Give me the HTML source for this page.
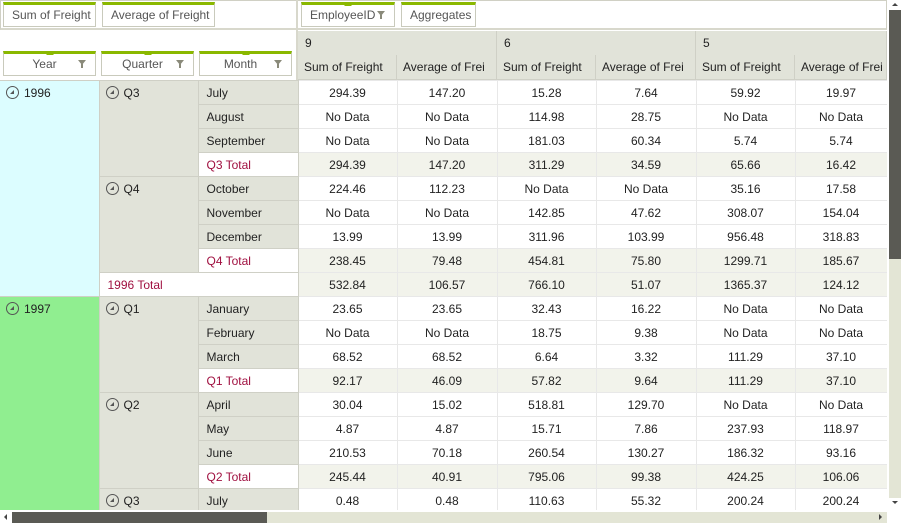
<!DOCTYPE html>
<html><head><meta charset="utf-8"><style>
*{box-sizing:border-box;margin:0;padding:0}
body{width:903px;height:526px;overflow:hidden;background:#fff;font-family:"Liberation Sans",sans-serif;font-size:12px;color:#222;position:relative}
.chip{position:absolute;height:25px;border:1px solid #c9cabc;border-top:3px solid #8ab800;background:#fff;color:#555;line-height:20px;padding-left:8px;font-size:12px}
.chip .tri{position:absolute;top:-3px;left:50%;margin-left:-4px;width:0;height:0;border-left:4px solid transparent;border-right:4px solid transparent;border-bottom:4px solid #8ab800}
.chip .fn{position:absolute;right:9px;top:6px;width:0;height:0;border-left:4px solid transparent;border-right:4px solid transparent;border-top:5px solid #8a8a7a}
.chip .fn:after{content:"";position:absolute;left:-1px;top:-1px;width:2px;height:4px;background:#8a8a7a}
table{position:absolute;left:0;top:80px;border-collapse:collapse;table-layout:fixed}
td{height:24px;padding:0 6px;white-space:nowrap;overflow:hidden;vertical-align:middle}
td.d{text-align:center;border:1px solid #e8e8e8;background:#fff}
td.t{background:#f2f3eb}
td.m{background:#e1e3d9;border:1px solid #cfd0c6;padding-left:8px}
td.mt{background:#fff;color:#a01040;border:1px solid #cfd0c6;padding-left:8px}
td.q{background:#e1e3d9;border:1px solid #cfd0c6;vertical-align:top;padding-top:5px}
td.y{vertical-align:top;padding-top:5px;border:1px solid #cfd0c6;border-left:none}
.ic{display:inline-block;width:13px;height:13px;border:1px solid #555;border-radius:50%;vertical-align:-2px;margin-right:5px;position:relative}
.ic:after{content:"";position:absolute;left:3px;top:3px;border-left:4px solid transparent;border-bottom:4px solid #555}
.hdr{position:absolute;background:#e1e3d9;border-right:1px solid #cfd0c6;border-bottom:1px solid #cfd0c6;padding-left:7px;line-height:24px;font-size:12px;overflow:hidden;white-space:nowrap}
</style></head><body>
<div style="position:absolute;left:0;top:0;width:887px;height:30px;border:1px solid #d0d0c4;border-bottom:2px solid #d8d8cc"></div>
<div style="position:absolute;left:296px;top:0;width:2px;height:80px;background:#d8d8cc"></div>
<div class="chip" style="left:3px;top:2px;width:93px">Sum of Freight</div>
<div class="chip" style="left:102px;top:2px;width:113px">Average of Freight</div>
<div class="chip" style="left:301px;top:2px;width:94px">EmployeeID<span class="tri"></span><span class="fn"></span></div>
<div class="chip" style="left:401px;top:2px;width:75px">Aggregates</div>
<div class="chip" style="left:3px;top:51px;width:93px;text-align:center;padding:0 10px 0 0">Year<span class="tri"></span><span class="fn"></span></div>
<div class="chip" style="left:101px;top:51px;width:93px;text-align:center;padding:0 10px 0 0">Quarter<span class="tri"></span><span class="fn"></span></div>
<div class="chip" style="left:199px;top:51px;width:93px;text-align:center;padding:0 10px 0 0">Month<span class="tri"></span><span class="fn"></span></div>
<div class="hdr" style="left:298px;top:31px;width:199px">9</div>
<div class="hdr" style="left:497px;top:31px;width:199px">6</div>
<div class="hdr" style="left:696px;top:31px;width:191px">5</div>
<div class="hdr" style="left:298px;top:55px;width:99px;padding-left:6px">Sum of Freight</div>
<div class="hdr" style="left:397px;top:55px;width:100px;padding-left:6px">Average of Frei</div>
<div class="hdr" style="left:497px;top:55px;width:99px;padding-left:6px">Sum of Freight</div>
<div class="hdr" style="left:596px;top:55px;width:100px;padding-left:6px">Average of Frei</div>
<div class="hdr" style="left:696px;top:55px;width:99px;padding-left:6px">Sum of Freight</div>
<div class="hdr" style="left:795px;top:55px;width:92px;padding-left:6px">Average of Frei</div>
<table>
<colgroup><col style="width:99px"><col style="width:99px"><col style="width:100px"><col style="width:99px"><col style="width:100px"><col style="width:99px"><col style="width:100px"><col style="width:99px"><col style="width:92px"></colgroup>
<tr><td class="y" rowspan="9" style="background:#dcfdff"><span class="ic"></span>1996</td><td class="q" rowspan="4"><span class="ic"></span>Q3</td><td class="m">July</td><td class="d">294.39</td><td class="d">147.20</td><td class="d">15.28</td><td class="d">7.64</td><td class="d">59.92</td><td class="d">19.97</td></tr>
<tr><td class="m">August</td><td class="d">No Data</td><td class="d">No Data</td><td class="d">114.98</td><td class="d">28.75</td><td class="d">No Data</td><td class="d">No Data</td></tr>
<tr><td class="m">September</td><td class="d">No Data</td><td class="d">No Data</td><td class="d">181.03</td><td class="d">60.34</td><td class="d">5.74</td><td class="d">5.74</td></tr>
<tr><td class="mt">Q3 Total</td><td class="d t">294.39</td><td class="d t">147.20</td><td class="d t">311.29</td><td class="d t">34.59</td><td class="d t">65.66</td><td class="d t">16.42</td></tr>
<tr><td class="q" rowspan="4"><span class="ic"></span>Q4</td><td class="m">October</td><td class="d">224.46</td><td class="d">112.23</td><td class="d">No Data</td><td class="d">No Data</td><td class="d">35.16</td><td class="d">17.58</td></tr>
<tr><td class="m">November</td><td class="d">No Data</td><td class="d">No Data</td><td class="d">142.85</td><td class="d">47.62</td><td class="d">308.07</td><td class="d">154.04</td></tr>
<tr><td class="m">December</td><td class="d">13.99</td><td class="d">13.99</td><td class="d">311.96</td><td class="d">103.99</td><td class="d">956.48</td><td class="d">318.83</td></tr>
<tr><td class="mt">Q4 Total</td><td class="d t">238.45</td><td class="d t">79.48</td><td class="d t">454.81</td><td class="d t">75.80</td><td class="d t">1299.71</td><td class="d t">185.67</td></tr>
<tr><td class="mt" colspan="2">1996 Total</td><td class="d t">532.84</td><td class="d t">106.57</td><td class="d t">766.10</td><td class="d t">51.07</td><td class="d t">1365.37</td><td class="d t">124.12</td></tr>
<tr><td class="y" rowspan="9" style="background:#90ee90"><span class="ic"></span>1997</td><td class="q" rowspan="4"><span class="ic"></span>Q1</td><td class="m">January</td><td class="d">23.65</td><td class="d">23.65</td><td class="d">32.43</td><td class="d">16.22</td><td class="d">No Data</td><td class="d">No Data</td></tr>
<tr><td class="m">February</td><td class="d">No Data</td><td class="d">No Data</td><td class="d">18.75</td><td class="d">9.38</td><td class="d">No Data</td><td class="d">No Data</td></tr>
<tr><td class="m">March</td><td class="d">68.52</td><td class="d">68.52</td><td class="d">6.64</td><td class="d">3.32</td><td class="d">111.29</td><td class="d">37.10</td></tr>
<tr><td class="mt">Q1 Total</td><td class="d t">92.17</td><td class="d t">46.09</td><td class="d t">57.82</td><td class="d t">9.64</td><td class="d t">111.29</td><td class="d t">37.10</td></tr>
<tr><td class="q" rowspan="4"><span class="ic"></span>Q2</td><td class="m">April</td><td class="d">30.04</td><td class="d">15.02</td><td class="d">518.81</td><td class="d">129.70</td><td class="d">No Data</td><td class="d">No Data</td></tr>
<tr><td class="m">May</td><td class="d">4.87</td><td class="d">4.87</td><td class="d">15.71</td><td class="d">7.86</td><td class="d">237.93</td><td class="d">118.97</td></tr>
<tr><td class="m">June</td><td class="d">210.53</td><td class="d">70.18</td><td class="d">260.54</td><td class="d">130.27</td><td class="d">186.32</td><td class="d">93.16</td></tr>
<tr><td class="mt">Q2 Total</td><td class="d t">245.44</td><td class="d t">40.91</td><td class="d t">795.06</td><td class="d t">99.38</td><td class="d t">424.25</td><td class="d t">106.06</td></tr>
<tr><td class="q"><span class="ic"></span>Q3</td><td class="m">July</td><td class="d">0.48</td><td class="d">0.48</td><td class="d">110.63</td><td class="d">55.32</td><td class="d">200.24</td><td class="d">200.24</td></tr>
</table>
<div style="position:absolute;left:0;top:510px;width:903px;height:16px;background:#fff"></div>
<div style="position:absolute;left:12px;top:512px;width:875px;height:11px;background:#e3e5d5"></div>
<div style="position:absolute;left:12px;top:512px;width:255px;height:11px;background:#5a5a54"></div>
<div style="position:absolute;left:4px;top:514px;border-top:3px solid transparent;border-bottom:3px solid transparent;border-right:3px solid #444"></div>
<div style="position:absolute;left:879px;top:514px;border-top:3px solid transparent;border-bottom:3px solid transparent;border-left:3px solid #444"></div>
<div style="position:absolute;left:887px;top:0;width:16px;height:510px;background:#fff"></div>
<div style="position:absolute;left:889px;top:10px;width:12px;height:488px;background:#e3e5d5"></div>
<div style="position:absolute;left:889px;top:10px;width:12px;height:249px;background:#5a5a54"></div>
<div style="position:absolute;left:892px;top:3px;border-left:3px solid transparent;border-right:3px solid transparent;border-bottom:3px solid #444"></div>
<div style="position:absolute;left:892px;top:501px;border-left:3px solid transparent;border-right:3px solid transparent;border-top:3px solid #444"></div>
</body></html>
